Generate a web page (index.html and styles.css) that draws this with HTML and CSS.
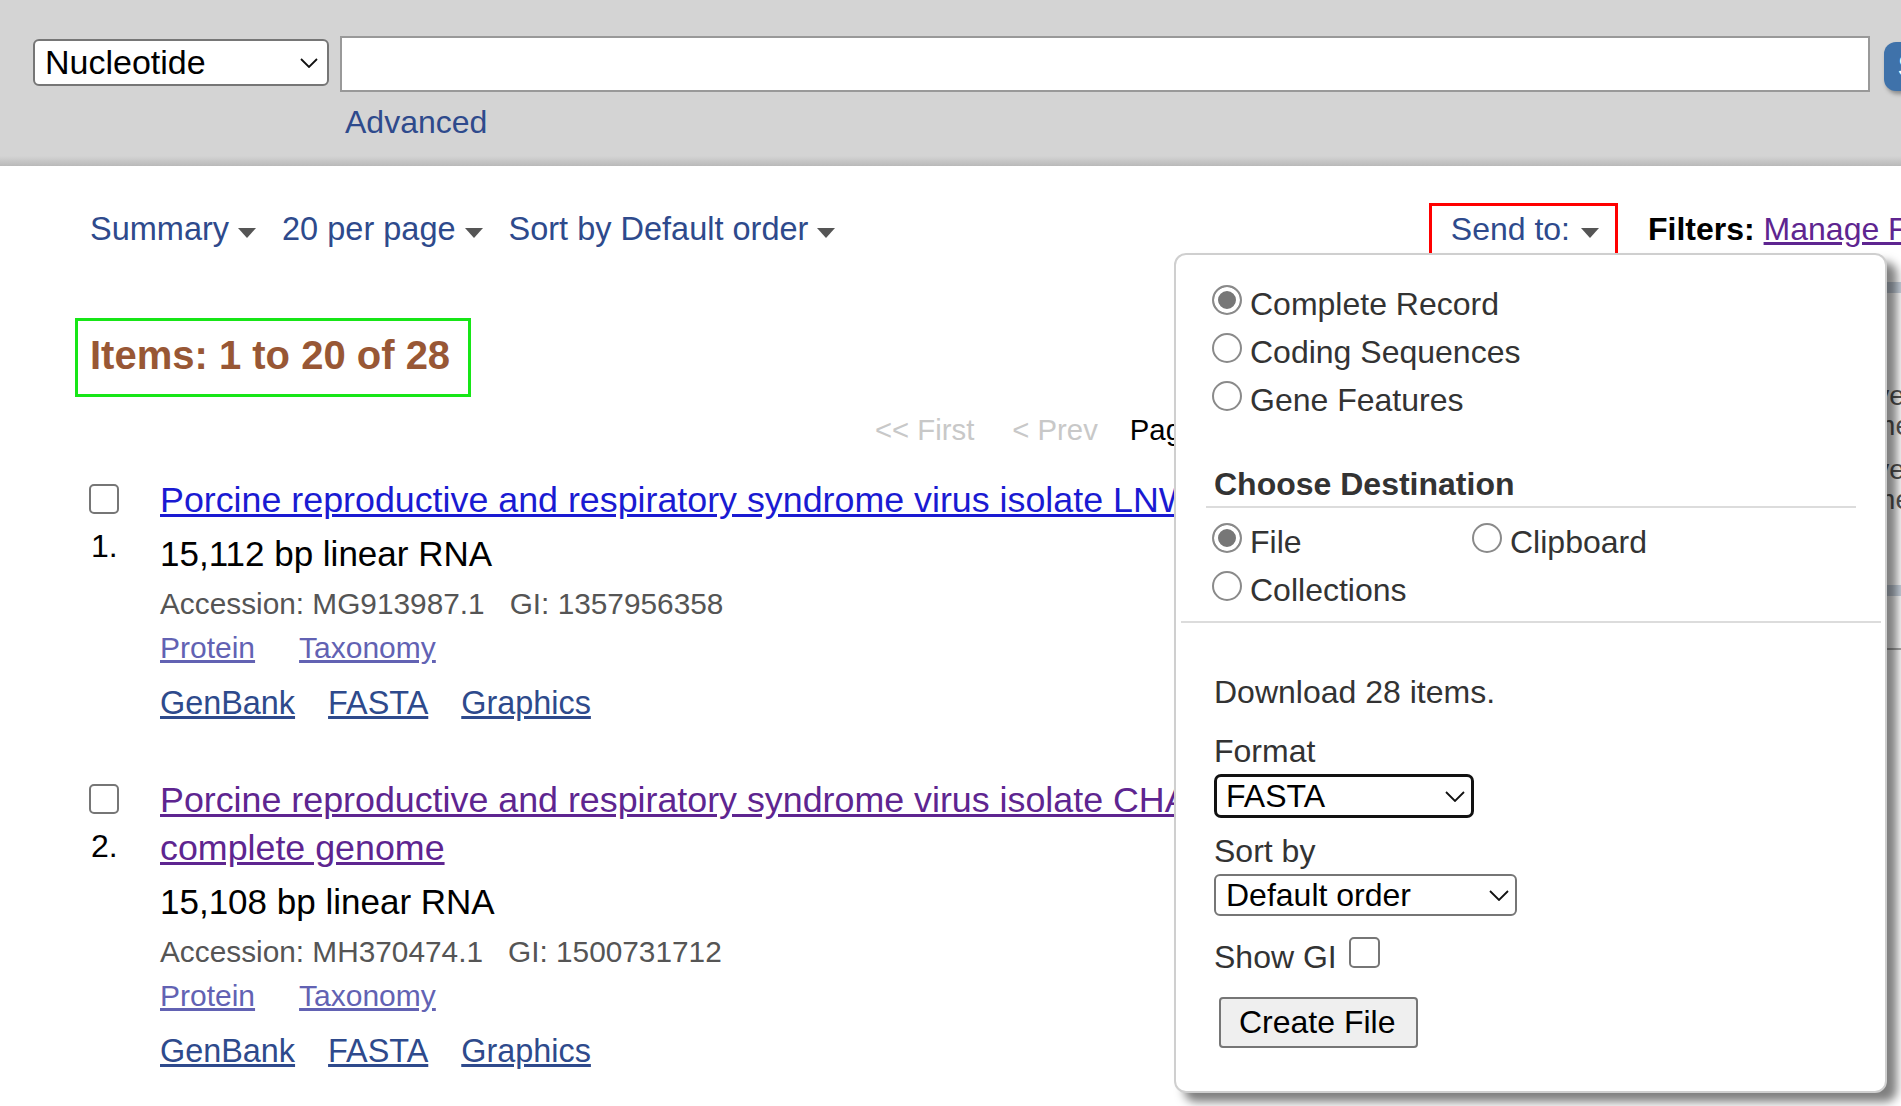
FILE: index.html
```html
<!DOCTYPE html>
<html lang="en">
<head>
<meta charset="utf-8">
<title>Nucleotide results</title>
<link rel="stylesheet" href="styles.css">
</head>
<body>
<header class="masthead">
  <div class="search-row">
    <div class="db-select"><span>Nucleotide</span><svg class="chev" width="18" height="10" viewBox="0 0 18 10"><polyline points="1,1 9,9 17,1" fill="none" stroke="#111" stroke-width="1.8"/></svg></div>
    <input class="term" type="text" aria-label="Search term">
    <button class="search-btn" type="button">Search</button>
  </div>
  <a class="advanced" href="#">Advanced</a>
</header>

<div class="content">
  <main class="results-col">
    <div class="toolbar">
      <div class="tb-left">
        <a class="tb-item" href="#">Summary<span class="tri"></span></a>
        <a class="tb-item" href="#">20 per page<span class="tri"></span></a>
        <a class="tb-item" href="#">Sort by Default order<span class="tri"></span></a>
      </div>
      <a class="sendto" href="#">Send to:<span class="tri"></span></a>
    </div>

    <div class="count">Items: 1 to 20 of 28</div>

    <div class="pager">
      <span class="pg-off first">&lt;&lt; First</span>
      <span class="pg-off prev">&lt; Prev</span>
      <span class="pg-page">Page <span class="pg-box">1</span> of 2</span>
      <a class="pg-link" href="#">Next &gt;</a>
      <a class="pg-link" href="#">Last &gt;&gt;</a>
    </div>

    <div class="rprt">
      <div class="rprt-left">
        <input class="cb" type="checkbox" aria-label="select item 1">
        <div class="num">1.</div>
      </div>
      <div class="rprt-body">
        <div class="title"><a class="t-new" href="#">Porcine reproductive and respiratory syndrome virus isolate LNWK130, complete genome</a></div>
        <div class="desc">15,112 bp linear RNA</div>
        <div class="acc">Accession: MG913987.1<span class="gi">GI: 1357956358</span></div>
        <div class="links1"><a href="#">Protein</a><a href="#">Taxonomy</a></div>
        <div class="links2"><a href="#">GenBank</a><a href="#">FASTA</a><a href="#">Graphics</a></div>
      </div>
    </div>

    <div class="rprt">
      <div class="rprt-left">
        <input class="cb" type="checkbox" aria-label="select item 2">
        <div class="num">2.</div>
      </div>
      <div class="rprt-body">
        <div class="title"><a class="t-visited" href="#">Porcine reproductive and respiratory syndrome virus isolate CHA-2017-HeN-ZMD-XS1, complete genome</a></div>
        <div class="desc">15,108 bp linear RNA</div>
        <div class="acc">Accession: MH370474.1<span class="gi">GI: 1500731712</span></div>
        <div class="links1"><a href="#">Protein</a><a href="#">Taxonomy</a></div>
        <div class="links2"><a href="#">GenBank</a><a href="#">FASTA</a><a href="#">Graphics</a></div>
      </div>
    </div>
  </main>

  <aside class="sidebar">
    <div class="filters"><b>Filters:</b> <a href="#">Manage Filters</a></div>
    <div class="side-bar"></div>
    <div class="side-head">Results by taxon</div>
    <ul class="side-list">
      <li>Porcine reproductive and</li>
      <li>respiratory syndrome virus</li>
      <li>Porcine reproductive and</li>
      <li>respiratory syndrome virus</li>
    </ul>
    <div class="side-bar side-bar2"></div>
    <div class="side-head side-head2">Find related data</div>
    <div class="side-sel">Select</div>
  </aside>
</div>

<div class="sendto-pop">
  <div class="fmt-radios">
    <label class="rad"><input type="radio" name="fmt" checked><span>Complete Record</span></label>
    <label class="rad"><input type="radio" name="fmt"><span>Coding Sequences</span></label>
    <label class="rad"><input type="radio" name="fmt"><span>Gene Features</span></label>
  </div>
  <div class="dest-head">Choose Destination</div>
  <div class="dest-grid">
    <label class="rad"><input type="radio" name="dest" checked><span>File</span></label>
    <label class="rad"><input type="radio" name="dest"><span>Clipboard</span></label>
    <label class="rad"><input type="radio" name="dest"><span>Collections</span></label>
  </div>
  <div class="sep"></div>
  <div class="dl">
    <div class="dl-text">Download 28 items.</div>
    <div class="lbl">Format</div>
    <div class="sel sel-focus"><span>FASTA</span><svg class="chev2" width="20" height="11" viewBox="0 0 20 11"><polyline points="1,1 10,10 19,1" fill="none" stroke="#111" stroke-width="1.8"/></svg></div>
    <div class="lbl lbl2">Sort by</div>
    <div class="sel sel-sort"><span>Default order</span><svg class="chev2" width="20" height="11" viewBox="0 0 20 11"><polyline points="1,1 10,10 19,1" fill="none" stroke="#111" stroke-width="1.8"/></svg></div>
    <div class="showgi">Show GI <input class="cb cb-gi" type="checkbox" aria-label="Show GI"></div>
    <button class="create" type="button">Create File</button>
  </div>
</div>
</body>
</html>
```

FILE: styles.css
```css
html, body {
  margin: 0;
  padding: 0;
  overflow: hidden;
  background: #fff;
}
body {
  position: relative;
  font-family: "Liberation Sans", Arial, sans-serif;
  font-size: 32px;
  color: #000;
  width: 1901px;
  height: 1106px;
}
a { text-decoration: none; }

/* ---------- masthead ---------- */
.masthead {
  height: 166px;
  box-sizing: border-box;
  background: linear-gradient(to bottom, #d4d4d4 0, #d4d4d4 156px, #b9b9b9 166px);
}
.search-row {
  display: flex;
  align-items: flex-start;
  padding: 36px 0 0 33px;
  height: 56px;
}
.db-select {
  flex: none;
  box-sizing: border-box;
  width: 296px;
  height: 47px;
  margin-top: 3px;
  border: 2px solid #767676;
  border-radius: 6px;
  background: #fff;
  display: flex;
  align-items: center;
  justify-content: space-between;
  padding: 0 9px 0 10px;
  font-size: 34px;
  color: #000;
}
.chev { display: block; }
.term {
  flex: none;
  box-sizing: border-box;
  width: 1530px;
  height: 56px;
  margin: 0 0 0 11px;
  border: 2px solid #999;
  background: #fff;
  padding: 0;
}
.search-btn {
  flex: none;
  margin: 6px 0 0 14px;
  height: 49px;
  width: 160px;
  border: 0;
  border-radius: 12px;
  background: #3f72aa;
  color: #fff;
  font-family: "Liberation Sans", Arial, sans-serif;
  font-size: 32px;
  font-weight: bold;
  text-align: left;
  padding: 0 0 0 14px;
  box-shadow: 2px 3px 4px rgba(0, 0, 0, 0.35);
}
.advanced {
  display: block;
  width: fit-content;
  margin: 10px 0 0 345px;
  line-height: 40px;
  color: #2e4a8c;
}

/* ---------- layout ---------- */
.content {
  display: flex;
  align-items: flex-start;
  padding-left: 75px;
}
.results-col {
  flex: none;
  width: 1543px;
}
.sidebar {
  flex: none;
  width: 420px;
  margin-left: 30px;
}

/* ---------- toolbar ---------- */
.toolbar {
  margin-top: 37px;
  display: flex;
  justify-content: space-between;
  align-items: flex-start;
}
.tb-left {
  display: flex;
  padding: 3px 0 0 15px;
  line-height: 46px;
  font-size: 32.5px;
}
.tb-item {
  color: #2e4a8c;
  margin-right: 26px;
}
.tri {
  display: inline-block;
  width: 0;
  height: 0;
  border-left: 9px solid transparent;
  border-right: 9px solid transparent;
  border-top: 10px solid #555;
  margin: 0 0 2px 9px;
}
.sendto {
  display: block;
  border: 3px solid #f00;
  padding: 0 16px 7px 19px;
  line-height: 46px;
  color: #2e4a8c;
}
.sendto .tri { margin-left: 11px; }

.filters {
  margin-top: 40px;
  line-height: 46px;
  white-space: nowrap;
}
.filters b { color: #000; }
.filters a {
  color: #5e2590;
  text-decoration: underline;
}

/* ---------- count ---------- */
.count {
  width: fit-content;
  margin-top: 56px;
  border: 3px solid #17e617;
  padding: 0 18px 5px 12px;
  line-height: 68px;
  font-size: 40px;
  font-weight: bold;
  color: #985735;
}

/* ---------- pager ---------- */
.pager {
  margin-top: 13px;
  padding-left: 800px;
  display: flex;
  line-height: 40px;
  font-size: 29.3px;
  white-space: nowrap;
}
.pg-off { color: #c8c8c8; }
.first { margin-right: 38px; }
.prev { margin-right: 32px; }
.pg-page { color: #000; margin-right: 32px; }
.pg-box {
  display: inline-block;
  border: 2px solid #999;
  padding: 0 10px;
  line-height: 34px;
}
.pg-link { color: #2e4a8c; margin-right: 32px; }

/* ---------- results ---------- */
.rprt {
  display: flex;
  padding-left: 14px;
  margin-top: 27px;
}
.rprt + .rprt { margin-top: 42px; }
.rprt-left {
  flex: none;
  width: 71px;
}
.cb {
  -webkit-appearance: none;
  appearance: none;
  display: block;
  box-sizing: border-box;
  width: 30px;
  height: 30px;
  margin: 7px 0 0 0;
  border: 2px solid #767676;
  border-radius: 5px;
  background: #fff;
}
.num {
  margin-top: 8px;
  padding-left: 2px;
  line-height: 48px;
}
.rprt-body {
  flex: 1;
  min-width: 0;
}
.title {
  font-size: 35.8px;
  line-height: 48px;
  margin-top: -1px;
  margin-bottom: 1px;
}
.title a { text-decoration: underline; }
.t-new { color: #1a1ad2; }
.t-visited { color: #5e2590; }
.desc {
  font-size: 35px;
  line-height: 58px;
  color: #000;
}
.acc {
  font-size: 29.8px;
  line-height: 42px;
  color: #555;
}
.gi { margin-left: 25px; }
.links1 {
  font-size: 30px;
  line-height: 46px;
  display: flex;
  gap: 44px;
}
.links1 a {
  color: #6262b3;
  text-decoration: underline;
}
.links2 {
  font-size: 32.4px;
  line-height: 64px;
  display: flex;
  gap: 33px;
}
.links2 a {
  color: #2e4a8c;
  text-decoration: underline;
}

/* ---------- sidebar (mostly hidden) ---------- */
.side-bar {
  margin-top: 30px;
  height: 11px;
  background: #c9d3df;
}
.side-head {
  margin-top: 46px;
  font-size: 28px;
  line-height: 36px;
  color: #985735;
}
.side-list {
  list-style: none;
  margin: 6px 0 0 0;
  padding: 0;
  font-size: 28px;
  line-height: 30px;
  color: #555;
}
.side-list li:nth-child(2n) { margin-bottom: 14px; }
.side-bar2 { margin-top: 70px; }
.side-head2 { margin-top: 12px; }
.side-sel {
  margin-top: 4px;
  border-top: 2px solid #aaa;
  font-size: 28px;
  line-height: 30px;
  color: #555;
}

/* ---------- send to popup ---------- */
.sendto-pop {
  position: absolute;
  left: 1174px;
  top: 253px;
  width: 713px;
  box-sizing: border-box;
  border: 2px solid #cfcfcf;
  border-radius: 12px;
  background: #fff;
  color: #333;
  box-shadow: 10px 9px 10px rgba(0, 0, 0, 0.5);
}
.fmt-radios {
  padding: 25px 0 0 36px;
}
.rad {
  display: flex;
  align-items: flex-start;
  line-height: 48px;
  white-space: nowrap;
}
.rad input {
  -webkit-appearance: none;
  appearance: none;
  flex: none;
  box-sizing: border-box;
  width: 30px;
  height: 30px;
  margin: 5px 8px 0 0;
  border: 2px solid #8a8a8a;
  border-radius: 50%;
  background: #fff;
}
.rad input:checked {
  background: #777;
  box-shadow: inset 0 0 0 4px #fff;
}
.dest-head {
  margin: 40px 29px 0 30px;
  padding: 0 0 2px 8px;
  border-bottom: 2px solid #dcdcdc;
  line-height: 40px;
  font-weight: bold;
}
.dest-grid {
  margin-top: 10px;
  padding-left: 36px;
  display: grid;
  grid-template-columns: 260px 1fr;
}
.sep {
  margin: 7px 4px 0 5px;
  height: 2px;
  background: #dcdcdc;
}
.dl {
  padding: 0 0 43px 38px;
}
.dl-text {
  margin-top: 45px;
  line-height: 48px;
}
.lbl {
  margin-top: 12px;
  line-height: 46px;
}
.lbl2 { margin-top: 10px; }
.sel {
  box-sizing: border-box;
  display: flex;
  align-items: center;
  justify-content: space-between;
  background: #fff;
  color: #000;
}
.sel-focus {
  width: 260px;
  height: 44px;
  border: 3px solid #111;
  border-radius: 7px;
  padding: 0 6px 0 9px;
}
.sel-sort {
  width: 303px;
  height: 42px;
  border: 2px solid #767676;
  border-radius: 6px;
  padding: 0 6px 0 10px;
}
.chev2 { display: block; }
.showgi {
  margin-top: 17px;
  display: flex;
  align-items: flex-start;
  line-height: 48px;
  white-space: pre;
}
.cb-gi {
  width: 31px;
  height: 31px;
  margin: 4px 0 0 3px;
}
.create {
  display: block;
  box-sizing: border-box;
  margin: 16px 0 0 5px;
  width: 199px;
  height: 51px;
  border: 2px solid #767676;
  border-radius: 4px;
  background: #efefef;
  color: #000;
  font-family: "Liberation Sans", Arial, sans-serif;
  font-size: 32px;
  padding: 0 0 0 18px;
  text-align: left;
}
```
